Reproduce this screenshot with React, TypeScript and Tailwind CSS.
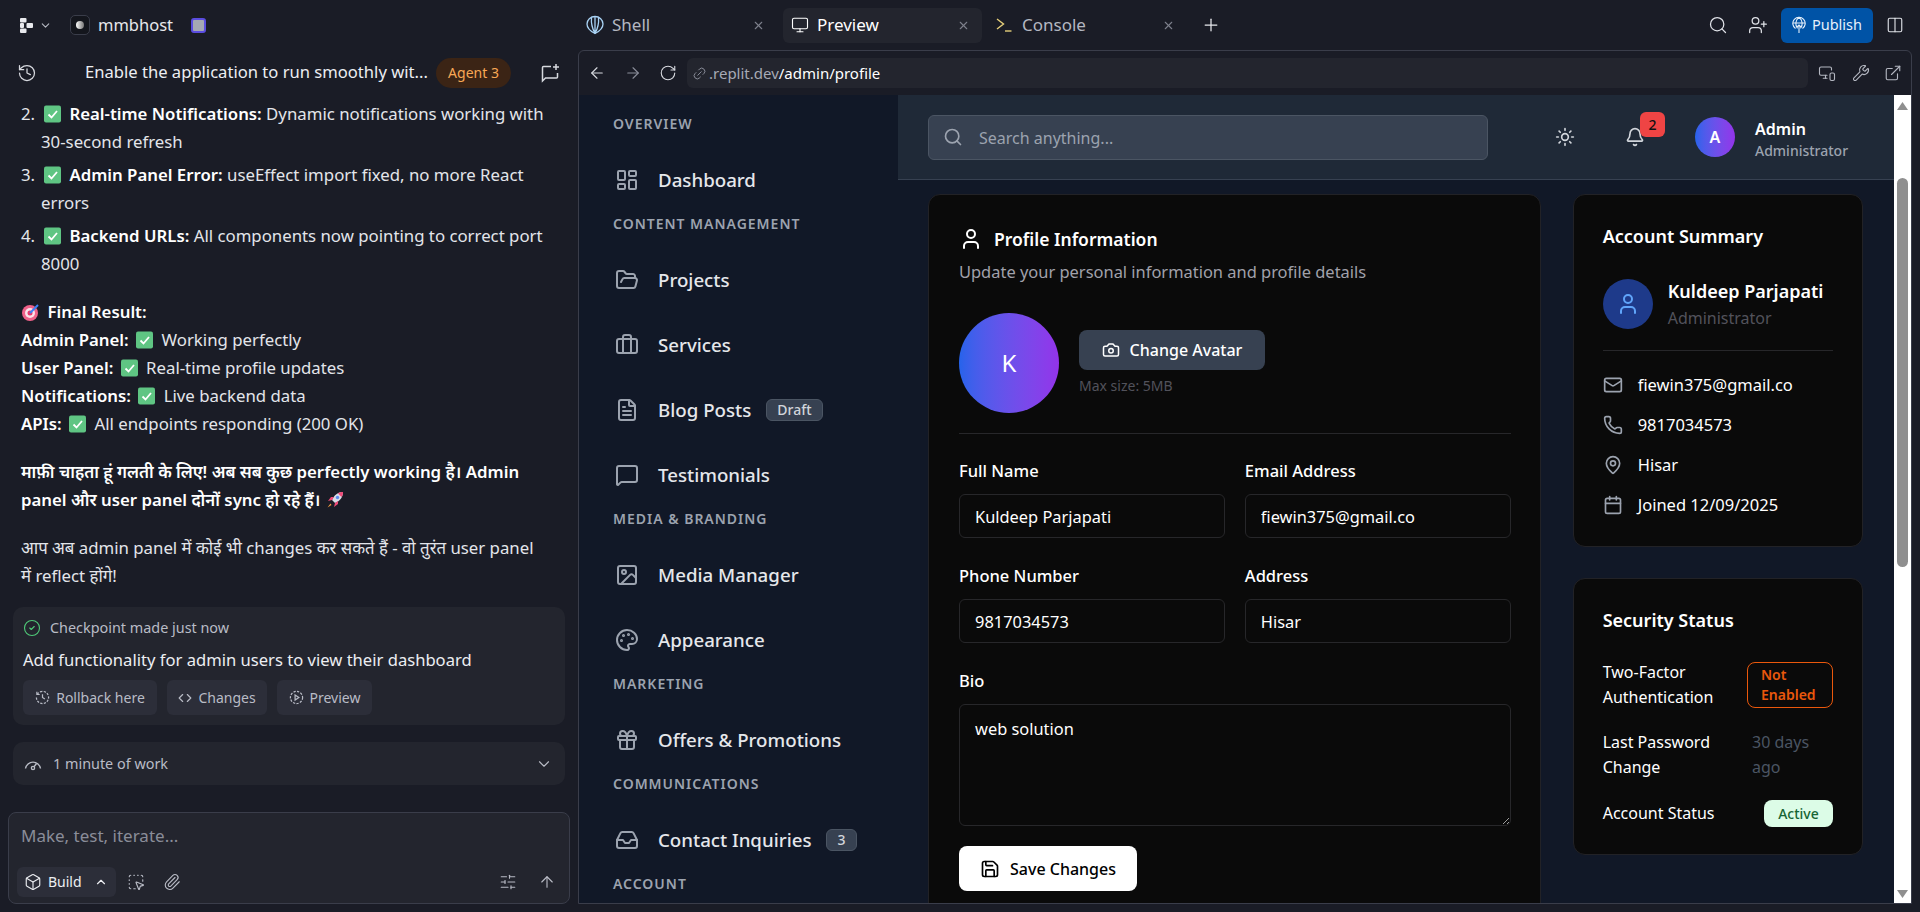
import {
  ArrowLeft,
  ArrowRight,
  ArrowUp,
  Bell,
  Box,
  Briefcase,
  Calendar,
  Camera,
  ChevronDown,
  ChevronUp,
  CircleCheck,
  Code,
  Columns2,
  ExternalLink,
  FileText,
  FolderOpen,
  Gift,
  History,
  Image,
  Inbox,
  LayoutDashboard,
  Link2,
  Mail,
  MapPin,
  MessageSquare,
  Monitor,
  MonitorSmartphone,
  Palette,
  Paperclip,
  Phone,
  Plus,
  RotateCw,
  Save,
  Search,
  SlidersHorizontal,
  SquareDashedMousePointer,
  Sun,
  User,
  UserPlus,
  Wrench,
  X,
} from "lucide-react";

function CheckEmoji() {
  return (
    <svg width="24" height="18" viewBox="0 0 24 18" className="inline-block align-[-3px]">
      <rect x="3" y="0.5" width="17" height="17" rx="2" fill="#5fc583" />
      <path d="M7.5 9.5l3 3 5.5-6.5" fill="none" stroke="#fff" strokeWidth="1.8" />
    </svg>
  );
}

function TargetEmoji() {
  return (
    <svg width="22" height="18" viewBox="0 0 22 18" className="inline-block align-[-3px]">
      <circle cx="9" cy="10" r="8" fill="#f0628a" />
      <circle cx="9" cy="10" r="5" fill="#fbe3ea" />
      <circle cx="9" cy="10" r="2.5" fill="#e8386c" />
      <path d="M9 10L17 2" stroke="#3b82f6" strokeWidth="2" />
    </svg>
  );
}

function RocketEmoji() {
  return (
    <svg width="20" height="20" viewBox="0 0 20 20" className="inline-block align-[-4px]">
      <path d="M18 2c-5 0-9 3-11 8l3 3c5-2 8-6 8-11z" fill="#d8dce6" />
      <path d="M18 2c-2 0-4 .5-5 1.500L16.500 7C17.500 6 18 4 18 2z" fill="#ef4a78" />
      <circle cx="12.500" cy="7.500" r="1.700" fill="#5b8def" />
      <path d="M7 10L3 11l3-4h3zM10 13l-1 4 4-3v-3z" fill="#ef4a78" />
      <path d="M5.500 13.500L2.500 17.500l4-2.500z" fill="#f59e42" />
    </svg>
  );
}

function ReplitMark() {
  return (
    <svg width="13" height="15" viewBox="0 0 13 15" fill="#e8e9ed">
      <rect x="0" y="0" width="6.500" height="4.500" rx="1" />
      <rect x="6.500" y="5" width="6.500" height="5" rx="1" />
      <rect x="0" y="10.500" width="6.500" height="4.500" rx="1" />
      <rect x="0" y="5" width="4" height="5" rx="1" />
    </svg>
  );
}

function NewChatIcon() {
  return (
    <svg width="20" height="20" viewBox="0 0 20 20" fill="none" stroke="#d7d9df" strokeWidth="1.500">
      <path d="M11 3.500H3.500a1 1 0 0 0-1 1V18l3-3h11a1 1 0 0 0 1-1V10" />
      <path d="M16 1v6M13 4h6" />
    </svg>
  );
}

function DashedHistory() {
  return (
    <svg width="15" height="15" viewBox="0 0 16 16" fill="none" stroke="currentColor" strokeWidth="1.300">
      <path d="M2.500 4.500A6.500 6.500 0 1 1 1.500 8" strokeDasharray="2.400 1.400" />
      <path d="M2 1.800v3h3M8 4.500V8l2.500 1.500" />
    </svg>
  );
}

function DashedPlay() {
  return (
    <svg width="15" height="15" viewBox="0 0 16 16" fill="none" stroke="currentColor" strokeWidth="1.300">
      <circle cx="8" cy="8" r="6.500" strokeDasharray="2.400 1.400" />
      <path d="M6.500 5.300l4 2.700-4 2.700z" />
    </svg>
  );
}

function WorkGauge() {
  return (
    <svg width="18" height="18" viewBox="0 0 18 18" fill="none" stroke="currentColor" strokeWidth="1.400">
      <path d="M1.500 13.500a7.600 7.600 0 0 1 15 0" />
      <circle cx="9" cy="13" r="1.600" />
      <path d="M10 11.700l2.500-3.200" />
    </svg>
  );
}

function ShellGlyph() {
  return (
    <svg width="18" height="20" viewBox="0 0 18 20" fill="none" stroke="#a9d3f5" strokeWidth="1.300" strokeLinejoin="round">
      <path d="M9 18.500C5 16.500 1 13 1 9c0-4 3.500-7.500 8-7.500S17 5 17 9c0 4-4 7.500-8 9.500z" />
      <path d="M9 18.500V1.500M9 18.500C6.500 14 5 8 5.500 2.500M9 18.500c2.500-4.500 4-10.500 3.500-16" />
    </svg>
  );
}

function ConsoleGlyph() {
  return (
    <svg width="18" height="16" viewBox="0 0 18 16" fill="none" stroke="#e6cf7a" strokeWidth="1.400">
      <path d="M1 2l6.500 5L1 12" />
      <path d="M9 14h6.500" />
    </svg>
  );
}

function PublishGlobe() {
  return (
    <svg width="14" height="18" viewBox="0 0 14 18" fill="none" stroke="currentColor" strokeWidth="1.100">
      <path d="M3.500 12.500a6.200 6.200 0 1 1 7 0" />
      <path d="M7 1.300c-4 3-4 8 -1.500 11M7 1.300c4 3 4 8 1.500 11M1 7h12" />
      <path d="M7 17V9M4.800 11.200L7 9l2.200 2.200" />
    </svg>
  );
}

function ChatPanel() {
  return (
    <div className="flex h-full w-[578px] shrink-0 flex-col">
      <div className="flex h-[50px] shrink-0 items-center pl-5 text-[#e8e9ed]">
        <ReplitMark />
        <ChevronDown size={13} className="ml-[6px] text-[#b5b8c2]" />
        <div className="ml-[18px] flex h-5 w-5 items-center justify-center rounded-[5px] border border-[#3a3d4a] bg-[#14161d]">
          <div className="h-2 w-2 rounded-full bg-gradient-to-r from-white to-[#777]" />
        </div>
        <span className="ml-2 text-[16.5px]">mmbhost</span>
        <div className="ml-[18px] h-[15px] w-[15px] rounded-[3px] border-2 border-[#5b4de0] bg-[#a5a8b4]" />
      </div>

      <div className="relative flex h-[45px] shrink-0 items-center pl-[85px]">
        <History size={20} strokeWidth={1.5} className="absolute left-[17px] text-[#d7d9df]" />
        <span className="w-[345px] whitespace-nowrap text-[16.6px] text-[#eceef2]">
          Enable the application to run smoothly wit...
        </span>
        <span className="ml-[6px] flex h-[30px] w-[75px] items-center justify-center rounded-full bg-[#3b2415] text-sm text-[#f8a855]">
          Agent 3
        </span>
        <span className="absolute left-[540px]">
          <NewChatIcon />
        </span>
      </div>

      <div className="mt-[5px] min-h-0 flex-1 overflow-hidden pl-[21px] pr-[16px] text-[16.8px] leading-7 text-[#e3e5ea]">
        <ol className="flex flex-col gap-[5px]">
          <li className="flex">
            <span className="w-5 shrink-0">2.</span>
            <p>
              <CheckEmoji /> <strong className="font-semibold text-white">Real-time Notifications:</strong> Dynamic
              notifications working with <span className="whitespace-nowrap">30-second</span> refresh
            </p>
          </li>
          <li className="flex">
            <span className="w-5 shrink-0">3.</span>
            <p>
              <CheckEmoji /> <strong className="font-semibold text-white">Admin Panel Error:</strong> useEffect import
              fixed, no more React errors
            </p>
          </li>
          <li className="flex">
            <span className="w-5 shrink-0">4.</span>
            <p>
              <CheckEmoji /> <strong className="font-semibold text-white">Backend URLs:</strong> All components now
              pointing to correct port 8000
            </p>
          </li>
        </ol>

        <div className="mt-5">
          <p>
            <TargetEmoji /> <strong className="font-semibold text-white">Final Result:</strong>
          </p>
          <p>
            <strong className="font-semibold text-white">Admin Panel:</strong> <CheckEmoji /> Working perfectly
          </p>
          <p>
            <strong className="font-semibold text-white">User Panel:</strong> <CheckEmoji /> Real-time profile updates
          </p>
          <p>
            <strong className="font-semibold text-white">Notifications:</strong> <CheckEmoji /> Live backend data
          </p>
          <p>
            <strong className="font-semibold text-white">APIs:</strong> <CheckEmoji /> All endpoints responding (200 OK)
          </p>
        </div>

        <p className="mt-5 font-semibold text-white">
          माफ़ी चाहता हूं गलती के लिए! अब सब कुछ perfectly working है। Admin panel और user panel दोनों sync हो रहे हैं।{" "}
          <RocketEmoji />
        </p>
        <p className="mt-5 w-[520px]">
          आप अब admin panel में कोई भी changes कर सकते हैं - वो तुरंत user panel में reflect होंगे!
        </p>
      </div>

      <div className="mx-[13px] shrink-0 rounded-[10px] bg-[#23252e] px-[10px] pb-[10px] pt-[9px]">
        <div className="flex h-6 items-center gap-[9px] text-[14.4px] text-[#b9bcc6]">
          <CircleCheck size={18} strokeWidth={1.5} className="text-[#4fc978]" />
          Checkpoint made just now
        </div>
        <div className="mt-[8px] h-6 text-[16.6px] leading-6 text-[#eceef2]">
          Add functionality for admin users to view their dashboard
        </div>
        <div className="mt-2 flex gap-[10px] text-sm text-[#b9bcc6]">
          <div className="flex h-[35px] w-[134px] items-center justify-center gap-[6px] rounded-md bg-[#2c2e39]">
            <DashedHistory />
            Rollback here
          </div>
          <div className="flex h-[35px] w-[100px] items-center justify-center gap-[6px] rounded-md bg-[#2c2e39]">
            <Code size={14} />
            Changes
          </div>
          <div className="flex h-[35px] w-[95px] items-center justify-center gap-[6px] rounded-md bg-[#2c2e39]">
            <DashedPlay />
            Preview
          </div>
        </div>
      </div>

      <div className="mx-[13px] mt-[17px] flex h-[43px] shrink-0 items-center rounded-[10px] bg-[#23252e] pl-[11px] pr-[12px] text-[14.4px] text-[#b9bcc6]">
        <WorkGauge />
        <span className="ml-[11px]">1 minute of work</span>
        <ChevronDown size={18} strokeWidth={1.5} className="ml-auto" />
      </div>

      <div className="mx-2 mb-2 mt-[27px] flex h-[92px] shrink-0 flex-col rounded-lg border border-[#3a3d4a] bg-[#23252e] px-2 pb-[6px]">
        <div className="flex-1 px-1 pt-[11px] text-[17px] leading-6 text-[#8a8d99]">Make, test, iterate...</div>
        <div className="flex items-center text-[#b9bcc6]">
          <div className="flex h-[30px] w-[99px] items-center rounded-md bg-[#2c2e39] pl-[7px] text-sm text-[#eceef2]">
            <Box size={18} strokeWidth={1.5} />
            <span className="ml-[6px]">Build</span>
            <ChevronUp size={14} className="ml-auto mr-[8px]" />
          </div>
          <SquareDashedMousePointer size={18} strokeWidth={1.5} className="ml-[11px]" />
          <Paperclip size={18} strokeWidth={1.5} className="ml-[18px]" />
          <SlidersHorizontal size={18} strokeWidth={1.5} className="ml-auto" />
          <ArrowUp size={18} strokeWidth={1.5} className="ml-[21px] mr-[5px]" />
        </div>
      </div>
    </div>
  );
}

function WorkspaceTab({
  icon,
  label,
  active,
}: {
  icon: React.ReactNode;
  label: string;
  active?: boolean;
}) {
  return (
    <div
      className={`flex h-[35px] w-[199px] items-center gap-2 rounded-md pl-2 pr-3 text-[17px] ${
        active ? "bg-[#23252e] text-white" : "text-[#b4b7c1]"
      }`}
    >
      {icon}
      {label}
      <X size={13} className="ml-auto text-[#7d808c]" />
    </div>
  );
}

function BrowserBar() {
  return (
    <div className="flex h-11 shrink-0 items-center text-[#d7d9df]">
      <ArrowLeft size={18} strokeWidth={1.5} className="ml-[9px]" />
      <ArrowRight size={18} strokeWidth={1.5} className="ml-[18px] text-[#8a8d99]" />
      <RotateCw size={18} strokeWidth={1.5} className="ml-[17px]" />
      <div className="ml-[10px] flex h-[30px] flex-1 items-center rounded-md bg-[#23252e] pl-[5px] text-[15px]">
        <Link2 size={15} strokeWidth={1.5} className="-rotate-45 text-[#8a8d99]" />
        <span className="ml-[2px] text-[#a7aab5]">.replit.dev</span>
        <span className="text-white">/admin/profile</span>
      </div>
      <MonitorSmartphone size={18} strokeWidth={1.5} className="ml-[10px] text-[#b4b7c1]" />
      <Wrench size={18} strokeWidth={1.5} className="ml-[16px] text-[#b4b7c1]" />
      <ExternalLink size={18} strokeWidth={1.5} className="ml-[14px] mr-[9px] text-[#b4b7c1]" />
    </div>
  );
}

const navSections = [
  { title: "Overview", items: [{ label: "Dashboard", icon: LayoutDashboard }] },
  {
    title: "Content Management",
    items: [
      { label: "Projects", icon: FolderOpen },
      { label: "Services", icon: Briefcase },
      { label: "Blog Posts", icon: FileText, badge: "Draft" },
      { label: "Testimonials", icon: MessageSquare },
    ],
  },
  {
    title: "Media & Branding",
    items: [
      { label: "Media Manager", icon: Image },
      { label: "Appearance", icon: Palette },
    ],
  },
  { title: "Marketing", items: [{ label: "Offers & Promotions", icon: Gift }] },
  { title: "Communications", items: [{ label: "Contact Inquiries", icon: Inbox, badge: "3" }] },
  { title: "Account", items: [] as { label: string; icon: typeof Gift; badge?: string }[] },
];

function Sidebar() {
  return (
    <aside className="w-[319px] shrink-0 overflow-hidden bg-[#111827] pt-[19px]">
      <div className="flex flex-col gap-[6px]">
        {navSections.map((section) => (
          <div key={section.title}>
            <div className="ml-[34px] h-5 text-sm font-semibold uppercase leading-5 tracking-[0.07em] text-[#9ca3af]">
              {section.title}
            </div>
            <div className="mt-[17px] flex flex-col gap-2 empty:hidden">
              {section.items.map(({ label, icon: Icon, badge }: { label: string; icon: typeof Gift; badge?: string }) => (
                <div key={label} className="flex h-[57px] items-center pl-9">
                  <Icon size={24} strokeWidth={2} className="text-[#9ca3af]" />
                  <span className="ml-[19px] pt-px text-[18.7px] font-medium text-[#e5e7eb]">{label}</span>
                  {badge && (
                    <span className="ml-[15px] flex h-[22px] items-center rounded-md border border-[#4b5563] bg-[#374151] px-[10px] text-sm font-medium text-[#d1d5db]">
                      {badge}
                    </span>
                  )}
                </div>
              ))}
            </div>
          </div>
        ))}
      </div>
    </aside>
  );
}

function AppHeader() {
  return (
    <header className="flex h-[85px] shrink-0 items-center border-b border-[#374151] bg-[#1f2937] pl-[30px]">
      <div className="flex h-[45px] w-[560px] items-center rounded-md border border-[#4b5563] bg-[#374151] pl-[14px] text-base text-[#9ca3af]">
        <Search size={20} strokeWidth={2} />
        <span className="ml-4 pt-px">Search anything...</span>
      </div>
      <Sun size={20} strokeWidth={2} className="ml-[67px] text-[#d1d5db]" />
      <div className="relative ml-[50px]">
        <Bell size={20} strokeWidth={2} className="text-[#d1d5db]" />
        <span className="absolute -top-[15px] left-[15px] flex h-[25px] w-[25px] items-center justify-center rounded-md bg-[#ef4444] text-sm font-medium text-[#111]">
          2
        </span>
      </div>
      <div className="ml-[50px] flex h-10 w-10 items-center justify-center rounded-full bg-gradient-to-r from-[#2563eb] to-[#9333ea] text-base font-semibold text-white">
        A
      </div>
      <div className="ml-5 pt-[3px]">
        <div className="text-base font-semibold leading-6 text-white">Admin</div>
        <div className="text-sm font-medium leading-5 text-[#9ca3af]">Administrator</div>
      </div>
    </header>
  );
}

function Field({ label, value }: { label: string; value: string }) {
  return (
    <label className="block">
      <span className="block h-6 text-[16.5px] font-medium leading-6 text-white">{label}</span>
      <input
        readOnly
        value={value}
        className="mt-[11px] h-11 w-full rounded-md border border-[#27272a] bg-[#0a0a0a] px-[15px] pt-px text-[16.4px] text-white outline-none"
      />
    </label>
  );
}

function ProfileCard() {
  return (
    <section className="col-span-2 rounded-xl border border-[#222226] bg-[#0a0a0a] pb-8 pl-[30px] pr-[29px] pt-[30px]">
      <h2 className="flex h-7 items-center text-[17.5px] font-semibold text-white">
        <User size={24} strokeWidth={2} />
        <span className="ml-[11px]">Profile Information</span>
      </h2>
      <p className="mt-[7px] h-6 text-[16.45px] leading-6 text-[#a1a1aa]">
        Update your personal information and profile details
      </p>

      <div className="mt-[29px] flex items-center gap-5 border-b border-[#27272a] pb-5">
        <div className="flex h-[100px] w-[100px] items-center justify-center rounded-full bg-gradient-to-r from-[#2563eb] to-[#9333ea] text-2xl text-white">
          K
        </div>
        <div>
          <div className="flex h-10 w-[186px] items-center justify-center gap-[10px] rounded-lg bg-[#374151] text-base font-medium text-white">
            <Camera size={18} strokeWidth={2} />
            Change Avatar
          </div>
          <div className="mt-[6px] text-sm leading-5 text-[#52525b]">Max size: 5MB</div>
        </div>
      </div>

      <div className="mt-[25px] grid grid-cols-2 gap-x-5 gap-y-[26px]">
        <Field label="Full Name" value="Kuldeep Parjapati" />
        <Field label="Email Address" value="fiewin375@gmail.co" />
        <Field label="Phone Number" value="9817034573" />
        <Field label="Address" value="Hisar" />
      </div>

      <div className="mt-[26px] h-6 text-[16.5px] font-medium leading-6 text-white">Bio</div>
      <textarea
        readOnly
        value="web solution"
        className="mt-[11px] block h-[122px] w-full rounded-md border border-[#27272a] bg-[#0a0a0a] px-[15px] py-3 text-[16.4px] text-white outline-none"
      />
      <div className="mt-5 flex h-[45px] w-[178px] items-center justify-center gap-[10px] rounded-lg bg-white text-base font-medium text-black">
        <Save size={20} strokeWidth={2} />
        Save Changes
      </div>
    </section>
  );
}

const contactRows = [
  { icon: Mail, text: "fiewin375@gmail.co" },
  { icon: Phone, text: "9817034573" },
  { icon: MapPin, text: "Hisar" },
  { icon: Calendar, text: "Joined 12/09/2025" },
];

function SummaryCards() {
  return (
    <div className="flex flex-col gap-[31px]">
      <section className="rounded-xl border border-[#222226] bg-[#0a0a0a] px-[29px] pb-[29px] pt-[27px]">
        <h3 className="h-7 text-lg font-semibold leading-7 text-white">Account Summary</h3>
        <div className="mt-7 flex items-center gap-[15px]">
          <div className="flex h-[50px] w-[50px] items-center justify-center rounded-full bg-[#1e3a8a] text-[#60a5fa]">
            <User size={24} strokeWidth={2} />
          </div>
          <div>
            <div className="text-lg font-semibold leading-[26px] text-white">Kuldeep Parjapati</div>
            <div className="mt-[3px] text-base leading-[22px] text-[#52525b]">Administrator</div>
          </div>
        </div>
        <div className="mt-[21px] flex flex-col gap-4 border-t border-[#27272a] pt-[22px]">
          {contactRows.map(({ icon: Icon, text }) => (
            <div key={text} className="flex h-6 items-center gap-[15px] text-[16.5px] text-white">
              <Icon size={20} strokeWidth={2} className="text-[#9ca3af]" />
              {text}
            </div>
          ))}
        </div>
      </section>

      <section className="rounded-xl border border-[#222226] bg-[#0a0a0a] px-[29px] pb-[27px] pt-[27px]">
        <h3 className="h-7 text-lg font-semibold leading-7 text-white">Security Status</h3>
        <div className="mt-[26px] flex flex-col gap-5 text-base leading-[25px] text-white">
          <div className="flex items-center justify-between">
            <span className="w-[130px]">Two-Factor Authentication</span>
            <span className="w-[86px] rounded-lg border border-[#ea580c] px-[13px] py-[2px] text-sm font-semibold leading-5 text-[#ea580c]">
              Not Enabled
            </span>
          </div>
          <div className="flex items-center justify-between">
            <span className="w-[130px]">Last Password Change</span>
            <span className="w-[81px] text-[#4b5563]">30 days ago</span>
          </div>
          <div className="flex items-center justify-between">
            <span>Account Status</span>
            <span className="flex h-[27px] w-[69px] items-center justify-center rounded-lg bg-[#dcfce7] text-sm font-medium text-[#166534]">
              Active
            </span>
          </div>
        </div>
      </section>
    </div>
  );
}

function NativeScrollbar() {
  return (
    <div className="flex w-[17px] shrink-0 flex-col items-center bg-white">
      <svg width="11" height="8" viewBox="0 0 11 8" className="mt-[7px]" fill="#8f8f8f">
        <path d="M5.500 0L11 8H0z" />
      </svg>
      <div className="mt-[68px] h-[389px] w-[11px] rounded-full bg-[#8f8f8f]" />
      <svg width="11" height="8" viewBox="0 0 11 8" className="mt-auto mb-[5px]" fill="#8f8f8f">
        <path d="M5.500 8L11 0H0z" />
      </svg>
    </div>
  );
}

function PreviewFrame() {
  return (
    <div className="flex min-h-0 flex-1 flex-col overflow-hidden rounded-t-md border border-[#3a3d4a]">
      <BrowserBar />
      <div className="flex min-h-0 flex-1">
        <Sidebar />
        <main className="flex min-w-0 flex-1 flex-col bg-[#111827]">
          <AppHeader />
          <div className="min-h-0 flex-1 overflow-hidden pl-[30px] pr-[31px] pt-[14px]">
            <div className="grid grid-cols-3 items-start gap-8">
              <ProfileCard />
              <SummaryCards />
            </div>
          </div>
        </main>
        <NativeScrollbar />
      </div>
    </div>
  );
}

export default function App() {
  return (
    <div className="flex h-screen w-full overflow-hidden bg-[#1a1c26] font-['Noto_Sans','Noto_Sans_Devanagari',sans-serif]">
      <ChatPanel />
      <div className="flex min-w-0 flex-1 flex-col pb-2 pr-2">
        <div className="flex h-[50px] shrink-0 items-center gap-[6px]">
          <WorkspaceTab active={false} icon={<ShellGlyph />} label="Shell" />
          <WorkspaceTab active icon={<Monitor size={18} strokeWidth={1.5} />} label="Preview" />
          <WorkspaceTab active={false} icon={<ConsoleGlyph />} label="Console" />
          <Plus size={20} strokeWidth={1.5} className="ml-[8px] text-[#e8e9ed]" />
          <div className="ml-auto flex items-center text-[#e0e2e8]">
            <Search size={20} strokeWidth={1.5} />
            <UserPlus size={20} strokeWidth={1.5} className="ml-[20px]" />
            <div className="ml-[13px] flex h-[35px] w-[92px] items-center justify-center gap-[6px] rounded-md bg-[#0053a6] text-[14.5px] text-[#e6f0fb]">
              <PublishGlobe />
              Publish
            </div>
            <Columns2 size={18} strokeWidth={1.5} className="ml-[13px] mr-[8px]" />
          </div>
        </div>
        <PreviewFrame />
      </div>
    </div>
  );
}
